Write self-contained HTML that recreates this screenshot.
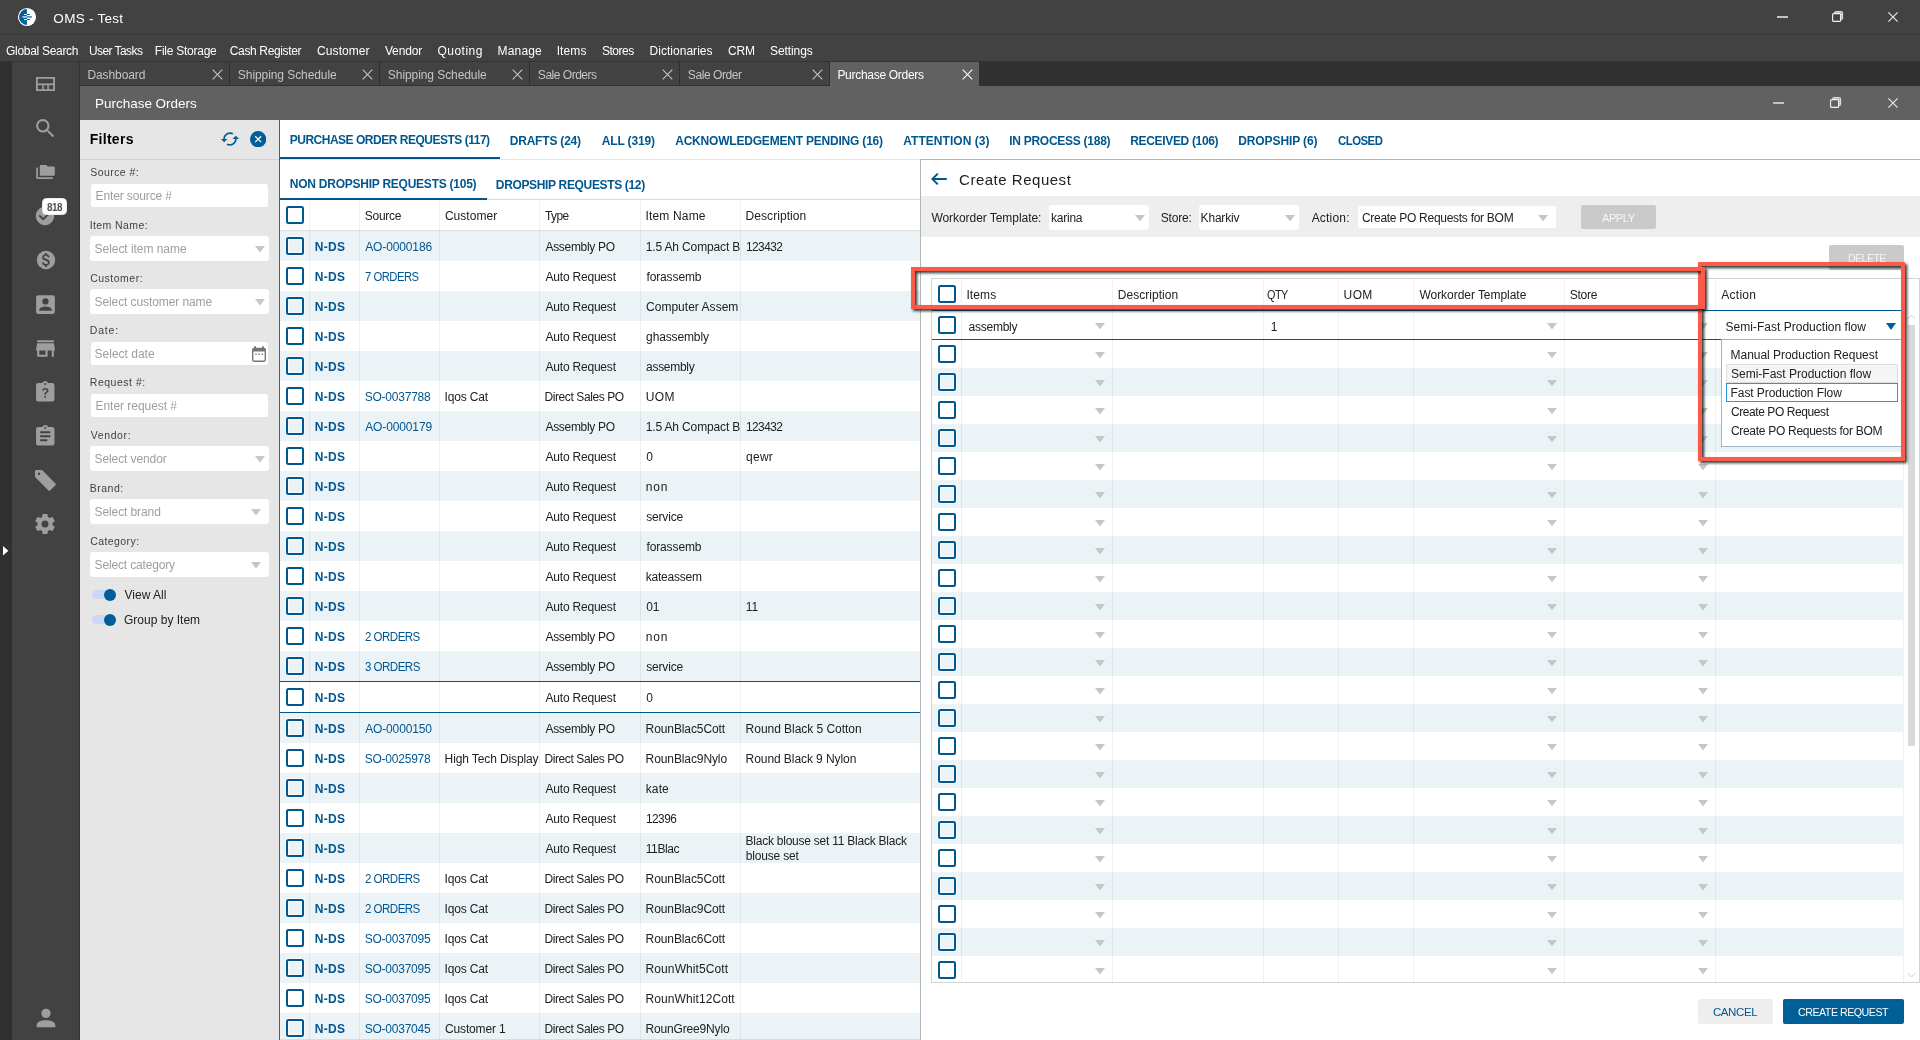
<!DOCTYPE html>
<html><head><meta charset="utf-8"><title>OMS - Test</title>
<style>
html,body{margin:0;padding:0;}
body{width:1920px;height:1040px;overflow:hidden;position:relative;background:#fff;
font-family:"Liberation Sans",sans-serif;font-size:12px;color:#212121;}
div,span.t,svg{position:absolute;box-sizing:border-box;}
span.t{white-space:nowrap;}
.cb{width:18px;height:18px;border:2px solid #00568f;border-radius:2.5px;box-shadow:0 0 0 1px rgba(255,255,255,.55),inset 0 0 0 1px rgba(255,255,255,.55);}
#root{left:0;top:0;width:1920px;height:1040px;will-change:transform;}
</style></head><body><div id="root">
<div style="left:0px;top:0px;width:1920px;height:61px;background:#424242;"></div>
<div style="left:0px;top:34px;width:1920px;height:1px;background:#383838;"></div>
<div style="left:0px;top:61px;width:1920px;height:25px;background:#303030;"></div>
<div style="left:0px;top:61px;width:1920px;height:1px;background:#343434;"></div>
<div style="left:0px;top:62px;width:12px;height:978px;background:#303030;"></div>
<div style="left:12px;top:62px;width:68px;height:978px;background:#424242;"></div>
<div style="left:79px;top:62px;width:1px;height:978px;background:#333333;"></div>
<div style="left:80px;top:86px;width:1840px;height:34px;background:#616161;"></div>
<svg style="left:17px;top:7px" width="20" height="20" viewBox="0 0 20 20"><circle cx="10" cy="10" r="9.6" fill="#3a3a3a"/><circle cx="10" cy="10" r="9.1" fill="#fff"/><path d="M9.9 2.1 A7.9 7.9 0 0 0 9.9 17.9 Z" fill="#00609c"/><rect x="7" y="7" width="2.9" height="1" fill="#fff"/><rect x="9.9" y="7" width="3" height="1" fill="#00609c"/><rect x="5.4" y="9.1" width="4.5" height="1.6" fill="#c4dcea"/><rect x="9.9" y="9.1" width="5" height="1.6" fill="#3f86b4"/><rect x="7" y="12" width="2.9" height="1" fill="#fff"/><rect x="9.9" y="12" width="3" height="1" fill="#00609c"/></svg>
<span class="t" style="left:53.36px;top:9px;font-size:13.5px;line-height:20px;color:#fff;letter-spacing:0.275px;">OMS - Test</span>
<div style="left:1777.3px;top:16px;width:10.5px;height:2px;background:#c2c2c2;"></div>
<svg style="left:1832px;top:11.2px" width="12" height="11" viewBox="0 0 12 11"><rect x="2.6" y="0.6" width="8" height="8" rx="1" fill="#b4b4b4" stroke="#e6e6e6" stroke-width="1"/><rect x="0.6" y="2.6" width="8" height="7.8" rx="1" fill="#424242" stroke="#f2f2f2" stroke-width="1.1"/></svg>
<svg style="left:1887.5px;top:12px" width="10" height="10" viewBox="0 0 10 10" stroke="#ececec" stroke-width="1.15"><path d="M0.4 0.4L9.6 9.6M9.6 0.4L0.4 9.6"/></svg>
<div style="left:1773.4px;top:102px;width:10.5px;height:2px;background:#c2c2c2;"></div>
<svg style="left:1830px;top:97.2px" width="12" height="11" viewBox="0 0 12 11"><rect x="2.6" y="0.6" width="8" height="8" rx="1" fill="#b4b4b4" stroke="#e6e6e6" stroke-width="1"/><rect x="0.6" y="2.6" width="8" height="7.8" rx="1" fill="#616161" stroke="#f2f2f2" stroke-width="1.1"/></svg>
<svg style="left:1887.5px;top:98px" width="10" height="10" viewBox="0 0 10 10" stroke="#ececec" stroke-width="1.15"><path d="M0.4 0.4L9.6 9.6M9.6 0.4L0.4 9.6"/></svg>
<span class="t" style="left:6.00px;top:42px;font-size:12px;line-height:18px;color:#fff;letter-spacing:-0.297px;">Global Search</span>
<span class="t" style="left:89.48px;top:42px;font-size:12px;line-height:18px;color:#fff;letter-spacing:-0.540px;transform:scaleX(0.9920);transform-origin:0 50%;">User Tasks</span>
<span class="t" style="left:154.82px;top:42px;font-size:12px;line-height:18px;color:#fff;letter-spacing:-0.253px;">File Storage</span>
<span class="t" style="left:229.79px;top:42px;font-size:12px;line-height:18px;color:#fff;letter-spacing:-0.360px;">Cash Register</span>
<span class="t" style="left:317.09px;top:42px;font-size:12px;line-height:18px;color:#fff;letter-spacing:0.070px;">Customer</span>
<span class="t" style="left:384.95px;top:42px;font-size:12px;line-height:18px;color:#fff;letter-spacing:-0.159px;">Vendor</span>
<span class="t" style="left:437.43px;top:42px;font-size:12px;line-height:18px;color:#fff;letter-spacing:0.485px;">Quoting</span>
<span class="t" style="left:497.62px;top:42px;font-size:12px;line-height:18px;color:#fff;letter-spacing:0.148px;">Manage</span>
<span class="t" style="left:556.69px;top:42px;font-size:12px;line-height:18px;color:#fff;letter-spacing:0.099px;">Items</span>
<span class="t" style="left:601.96px;top:42px;font-size:12px;line-height:18px;color:#fff;letter-spacing:-0.462px;">Stores</span>
<span class="t" style="left:649.62px;top:42px;font-size:12px;line-height:18px;color:#fff;letter-spacing:0.020px;">Dictionaries</span>
<span class="t" style="left:727.99px;top:42px;font-size:12px;line-height:18px;color:#fff;letter-spacing:-0.217px;">CRM</span>
<span class="t" style="left:770.06px;top:42px;font-size:12px;line-height:18px;color:#fff;letter-spacing:-0.097px;">Settings</span>
<div style="left:80px;top:62px;width:149px;height:23px;background:#424242;"></div>
<span class="t" style="left:87.42px;top:66px;font-size:12px;line-height:18px;color:#c4c4c4;letter-spacing:-0.083px;">Dashboard</span>
<svg style="left:212px;top:69px" width="11" height="11" viewBox="0 0 11 11" stroke="#c4c4c4" stroke-width="1.1"><path d="M0.7 0.7L10.3 10.3M10.3 0.7L0.7 10.3"/></svg>
<div style="left:230px;top:62px;width:149px;height:23px;background:#424242;"></div>
<span class="t" style="left:237.86px;top:66px;font-size:12px;line-height:18px;color:#c4c4c4;letter-spacing:-0.075px;">Shipping Schedule</span>
<svg style="left:362px;top:69px" width="11" height="11" viewBox="0 0 11 11" stroke="#c4c4c4" stroke-width="1.1"><path d="M0.7 0.7L10.3 10.3M10.3 0.7L0.7 10.3"/></svg>
<div style="left:380px;top:62px;width:149px;height:23px;background:#424242;"></div>
<span class="t" style="left:387.86px;top:66px;font-size:12px;line-height:18px;color:#c4c4c4;letter-spacing:-0.075px;">Shipping Schedule</span>
<svg style="left:512px;top:69px" width="11" height="11" viewBox="0 0 11 11" stroke="#c4c4c4" stroke-width="1.1"><path d="M0.7 0.7L10.3 10.3M10.3 0.7L0.7 10.3"/></svg>
<div style="left:530px;top:62px;width:149px;height:23px;background:#424242;"></div>
<span class="t" style="left:537.86px;top:66px;font-size:12px;line-height:18px;color:#c4c4c4;letter-spacing:-0.485px;">Sale Orders</span>
<svg style="left:662px;top:69px" width="11" height="11" viewBox="0 0 11 11" stroke="#c4c4c4" stroke-width="1.1"><path d="M0.7 0.7L10.3 10.3M10.3 0.7L0.7 10.3"/></svg>
<div style="left:680px;top:62px;width:149px;height:23px;background:#424242;"></div>
<span class="t" style="left:687.86px;top:66px;font-size:12px;line-height:18px;color:#c4c4c4;letter-spacing:-0.432px;">Sale Order</span>
<svg style="left:812px;top:69px" width="11" height="11" viewBox="0 0 11 11" stroke="#c4c4c4" stroke-width="1.1"><path d="M0.7 0.7L10.3 10.3M10.3 0.7L0.7 10.3"/></svg>
<div style="left:830px;top:62px;width:149px;height:24px;background:#616161;"></div>
<span class="t" style="left:837.42px;top:66px;font-size:12px;line-height:18px;color:#fff;letter-spacing:-0.292px;">Purchase Orders</span>
<svg style="left:962px;top:69px" width="11" height="11" viewBox="0 0 11 11" stroke="#fff" stroke-width="1.1"><path d="M0.7 0.7L10.3 10.3M10.3 0.7L0.7 10.3"/></svg>
<span class="t" style="left:95.09px;top:94px;font-size:13.5px;line-height:20px;color:#fff;letter-spacing:-0.032px;">Purchase Orders</span>
<svg style="left:36px;top:77px" width="19" height="14" viewBox="0 0 19 14" fill="none" stroke="#9e9e9e"><rect x="0.9" y="0.9" width="17.2" height="12.2" stroke-width="1.8"/><path d="M1 7.3H18" stroke-width="1.8"/><path d="M7.1 7.2V13M12.15 7.2V13" stroke-width="2.1" stroke-opacity="0.8"/></svg>
<svg style="left:36px;top:165px" width="19" height="14" viewBox="0 0 19 14" fill="#9e9e9e"><path d="M5 0H10.2L11.8 1.6H17.6A1.2 1.2 0 0 1 18.8 2.8V9.6A1.2 1.2 0 0 1 17.6 10.8H5A1.2 1.2 0 0 1 3.8 9.6V1.2A1.2 1.2 0 0 1 5 0Z"/><path d="M0.2 2.4H1.9V12.2H16.8V14H1.4A1.2 1.2 0 0 1 0.2 12.8Z"/></svg>
<svg style="left:33.1px;top:115.6px" width="24.8" height="24.8" viewBox="0 0 24 24"><path fill="#9e9e9e" d="M9.5,3A6.5,6.5 0 0,1 16,9.5C16,11.11 15.41,12.59 14.44,13.73L14.71,14H15.5L20.5,19L19,20.5L14,15.5V14.71L13.73,14.44C12.59,15.41 11.11,16 9.5,16A6.5,6.5 0 0,1 3,9.5A6.5,6.5 0 0,1 9.5,3M9.5,5C7,5 5,7 5,9.5C5,12 7,14 9.5,14C12,14 14,12 14,9.5C14,7 12,5 9.5,5Z"/></svg>
<svg style="left:34.3px;top:205px" width="22" height="22" viewBox="0 0 24 24"><path fill="#9e9e9e" d="M12 2C6.5 2 2 6.5 2 12S6.5 22 12 22 22 17.5 22 12 17.5 2 12 2M10 17L5 12L6.41 10.59L10 14.17L17.59 6.58L19 8L10 17Z"/></svg>
<svg style="left:34.6px;top:249px" width="22" height="22" viewBox="0 0 24 24"><circle cx="12" cy="12" r="10" fill="#9e9e9e"/><g transform="translate(12 12) scale(1.2 1.26) translate(-11.9 -12)"><path fill="#424242" d="M12.5,6H11V7.1C9.5,7.4 8.5,8.4 8.5,9.8C8.5,11.5 9.9,12.2 11.6,12.7C13.2,13.1 13.6,13.6 13.6,14.3C13.6,14.8 13.2,15.5 12,15.5C10.7,15.5 10.1,14.9 10,14.1H8.3C8.4,15.7 9.6,16.6 11,16.9V18H12.5V16.9C14,16.6 15.3,15.8 15.3,14.2C15.3,12.1 13.5,11.4 12,11C10.5,10.6 10.1,10.2 10.1,9.6C10.1,8.900 10.8,8.4 11.8,8.4C12.9,8.4 13.4,8.900 13.4,9.7H15.1C15,8.4 14.1,7.4 12.5,7.1V6Z"/></g></svg>
<svg style="left:33px;top:291.5px" width="25" height="25" viewBox="0 0 24 24"><path fill="#9e9e9e" d="M6,17C6,15 10,13.9 12,13.9C14,13.9 18,15 18,17V18H6M15,9A3,3 0 0,1 12,12A3,3 0 0,1 9,9A3,3 0 0,1 12,6A3,3 0 0,1 15,9M3,5V19A2,2 0 0,0 5,21H19A2,2 0 0,0 21,19V5A2,2 0 0,0 19,3H5C3.89,3 3,3.9 3,5Z"/></svg>
<svg style="left:33px;top:335.5px" width="25" height="25" viewBox="0 0 24 24"><path fill="#9e9e9e" d="M12,18H6V14H12M21,14V12L20,7H4L3,12V14H4V20H14V14H18V20H20V14M20,4H4V6H20V4Z"/></svg>
<svg style="left:33.25px;top:379.75px" width="24.5" height="24.5" viewBox="0 0 24 24"><path fill="#9e9e9e" d="M19,3H14.82C14.4,1.84 13.3,1 12,1C10.7,1 9.6,1.84 9.18,3H5A2,2 0 0,0 3,5V19A2,2 0 0,0 5,21H19A2,2 0 0,0 21,19V5A2,2 0 0,0 19,3M12,3A1,1 0 0,1 13,4A1,1 0 0,1 12,5A1,1 0 0,1 11,4A1,1 0 0,1 12,3"/><g transform="translate(12 12.6) scale(0.8) translate(-12.1 -12.1)"><path fill="#424242" d="M13,18H11V16H13V18M14.6,11.6C13.6,12.4 13,12.9 13,14.5H11C11,12.4 11.9,11.6 12.9,10.8C13.5,10.3 14,9.9 14,9.2C14,8.4 13.3,7.9 12.2,7.9C11,7.9 10.3,8.5 10.1,9.5L8.2,9.1C8.5,7.3 10,6.2 12.2,6.2C14.5,6.2 16,7.4 16,9.1C16,10.3 15.3,11 14.6,11.6Z"/></g></svg>
<svg style="left:33.25px;top:423.75px" width="24.5" height="24.5" viewBox="0 0 24 24"><path fill="#9e9e9e" d="M17,9H7V7H17M17,13H7V11H17M14,17H7V15H14M12,3A1,1 0 0,1 13,4A1,1 0 0,1 12,5A1,1 0 0,1 11,4A1,1 0 0,1 12,3M19,3H14.82C14.4,1.84 13.3,1 12,1C10.7,1 9.6,1.84 9.18,3H5A2,2 0 0,0 3,5V19A2,2 0 0,0 5,21H19A2,2 0 0,0 21,19V5A2,2 0 0,0 19,3Z"/></svg>
<svg style="left:34.9px;top:469.7px" width="22" height="22" viewBox="0 0 22 22"><path d="M1.2 1.2L6.5 1.2L19.6 14.3L14.3 19.6L1.2 6.5Z" fill="#9e9e9e" stroke="#9e9e9e" stroke-width="2.4" stroke-linejoin="round"/><circle cx="4" cy="3.8" r="1.25" fill="#424242"/></svg>
<svg style="left:33.2px;top:512px" width="24" height="24" viewBox="0 0 24 24"><path fill="#9e9e9e" d="M12,15.5A3.5,3.5 0 0,1 8.5,12A3.5,3.5 0 0,1 12,8.5A3.5,3.5 0 0,1 15.5,12A3.5,3.5 0 0,1 12,15.5M19.43,12.97C19.47,12.65 19.5,12.33 19.5,12C19.5,11.67 19.47,11.34 19.43,11L21.54,9.37C21.73,9.22 21.78,8.95 21.66,8.73L19.66,5.27C19.54,5.05 19.27,4.96 19.05,5.05L16.56,6.05C16.04,5.66 15.5,5.32 14.87,5.07L14.5,2.42C14.46,2.18 14.25,2 14,2H10C9.75,2 9.54,2.18 9.5,2.42L9.13,5.07C8.5,5.32 7.96,5.66 7.44,6.05L4.95,5.05C4.73,4.96 4.46,5.05 4.34,5.27L2.34,8.73C2.21,8.95 2.27,9.22 2.46,9.37L4.57,11C4.53,11.34 4.5,11.67 4.5,12C4.5,12.33 4.53,12.65 4.57,12.97L2.46,14.63C2.27,14.78 2.21,15.05 2.34,15.27L4.34,18.73C4.46,18.95 4.73,19.03 4.95,18.95L7.44,17.94C7.96,18.34 8.5,18.68 9.13,18.93L9.5,21.58C9.54,21.82 9.75,22 10,22H14C14.25,22 14.46,21.82 14.5,21.58L14.87,18.93C15.5,18.67 16.04,18.34 16.56,17.94L19.05,18.95C19.27,19.03 19.54,18.95 19.66,18.73L21.66,15.27C21.78,15.05 21.73,14.78 21.54,14.63L19.43,12.97Z"/></svg>
<svg style="left:31.5px;top:1004px" width="28" height="28" viewBox="0 0 24 24"><path fill="#9e9e9e" d="M12,4A4,4 0 0,1 16,8A4,4 0 0,1 12,12A4,4 0 0,1 8,8A4,4 0 0,1 12,4M12,14C16.42,14 20,15.79 20,18V20H4V18C4,15.79 7.58,14 12,14Z"/></svg>
<div style="left:42.4px;top:197.8px;width:24.4px;height:17.2px;background:#fff;border-radius:4.5px;border:1px solid #ededed;"></div>
<span class="t" style="left:46.79px;top:200px;font-size:10px;line-height:16px;color:#505050;font-weight:bold;letter-spacing:-0.450px;transform:scaleX(0.9893);transform-origin:0 50%;">818</span>
<svg style="left:3px;top:546px" width="6" height="10" viewBox="0 0 6 10"><path d="M0 0L5.4 4.8L0 9.6Z" fill="#fff"/></svg>
<div style="left:80px;top:120px;width:199px;height:920px;background:#e6e6e6;"></div>
<div style="left:279px;top:120px;width:1px;height:920px;background:#5a5a5a;"></div>
<div style="left:80px;top:159px;width:199px;height:1px;background:#d2d2d2;"></div>
<span class="t" style="left:89.66px;top:129px;font-size:14px;line-height:20px;color:#000;font-weight:bold;letter-spacing:0.299px;">Filters</span>
<svg style="left:220.1px;top:129.2px" width="20" height="20" viewBox="0 0 24 24"><path fill="#005f96" d="M19 8l-4 4h3c0 3.31-2.69 6-6 6-1.01 0-1.97-.25-2.8-.7l-1.46 1.46C8.97 19.54 10.43 20 12 20c4.42 0 8-3.58 8-8h3l-4-4zM6 12c0-3.310 2.69-6 6-6 1.010 0 1.970.25 2.800.7l1.460-1.460C15.030 4.460 13.570 4 12 4c-4.420 0-8 3.580-8 8H1l4 4 4-4H6z"/></svg>
<svg style="left:250px;top:130.9px" width="16.3" height="16.3" viewBox="0 0 16 16"><circle cx="8" cy="8" r="8" fill="#005f96"/><path d="M5.1 5.1L10.9 10.9M10.9 5.1L5.1 10.9" stroke="#fff" stroke-width="1.25"/></svg>
<span class="t" style="left:90.22px;top:164px;font-size:10.5px;line-height:16px;color:#424242;letter-spacing:0.435px;">Source #:</span>
<div style="left:90.7px;top:184px;width:177.6px;height:23px;background:#fff;border-radius:2.5px;"></div>
<span class="t" style="left:95.52px;top:187px;font-size:12px;line-height:18px;color:#9e9e9e;letter-spacing:-0.116px;">Enter source #</span>
<span class="t" style="left:89.73px;top:217px;font-size:10.5px;line-height:16px;color:#424242;letter-spacing:0.407px;">Item Name:</span>
<div style="left:90px;top:236px;width:179px;height:25px;background:#fff;border-radius:3px;"></div>
<span class="t" style="left:94.56px;top:240px;font-size:12px;line-height:18px;color:#9e9e9e;letter-spacing:-0.043px;">Select item name</span>
<svg style="left:255.1px;top:246.2px" width="10" height="6.6" viewBox="0 0 10 6.6"><path d="M0 0H10L5 6.6Z" fill="#c6c6c6"/></svg>
<span class="t" style="left:90.17px;top:270px;font-size:10.5px;line-height:16px;color:#424242;letter-spacing:0.507px;">Customer:</span>
<div style="left:90px;top:289px;width:179px;height:25px;background:#fff;border-radius:3px;"></div>
<span class="t" style="left:94.56px;top:293px;font-size:12px;line-height:18px;color:#9e9e9e;letter-spacing:-0.095px;">Select customer name</span>
<svg style="left:255.1px;top:299.2px" width="10" height="6.6" viewBox="0 0 10 6.6"><path d="M0 0H10L5 6.6Z" fill="#c6c6c6"/></svg>
<span class="t" style="left:89.84px;top:322px;font-size:10.5px;line-height:16px;color:#424242;letter-spacing:0.803px;">Date:</span>
<div style="left:90.7px;top:342px;width:177.6px;height:23px;background:#fff;border-radius:2.5px;"></div>
<span class="t" style="left:94.56px;top:345px;font-size:12px;line-height:18px;color:#9e9e9e;letter-spacing:0.003px;">Select date</span>
<svg style="left:252px;top:345.6px" width="14" height="16" viewBox="0 0 14 16"><rect x="0.7" y="2.5" width="12.6" height="12.8" rx="1.6" fill="none" stroke="#757575" stroke-width="1.4"/><rect x="0.7" y="2.5" width="12.6" height="3" fill="#757575"/><rect x="2.2" y="0.2" width="1.8" height="3" fill="#757575"/><rect x="10" y="0.2" width="1.8" height="3" fill="#757575"/><rect x="3.1" y="7.6" width="1.7" height="1.2" fill="#757575"/><rect x="6.1" y="7.6" width="1.7" height="1.2" fill="#757575"/><rect x="9.3" y="7.6" width="1.7" height="1.2" fill="#757575"/></svg>
<span class="t" style="left:89.84px;top:374px;font-size:10.5px;line-height:16px;color:#424242;letter-spacing:0.503px;">Request #:</span>
<div style="left:90.7px;top:394px;width:177.6px;height:23px;background:#fff;border-radius:2.5px;"></div>
<span class="t" style="left:95.52px;top:397px;font-size:12px;line-height:18px;color:#9e9e9e;letter-spacing:-0.037px;">Enter request #</span>
<span class="t" style="left:90.65px;top:427px;font-size:10.5px;line-height:16px;color:#424242;letter-spacing:0.634px;">Vendor:</span>
<div style="left:90px;top:446px;width:179px;height:25px;background:#fff;border-radius:3px;"></div>
<span class="t" style="left:94.56px;top:450px;font-size:12px;line-height:18px;color:#9e9e9e;letter-spacing:-0.096px;">Select vendor</span>
<svg style="left:255.1px;top:456.2px" width="10" height="6.6" viewBox="0 0 10 6.6"><path d="M0 0H10L5 6.6Z" fill="#c6c6c6"/></svg>
<span class="t" style="left:89.84px;top:480px;font-size:10.5px;line-height:16px;color:#424242;letter-spacing:0.477px;">Brand:</span>
<div style="left:90px;top:499px;width:179px;height:25px;background:#fff;border-radius:3px;"></div>
<span class="t" style="left:94.56px;top:503px;font-size:12px;line-height:18px;color:#9e9e9e;letter-spacing:-0.098px;">Select brand</span>
<svg style="left:251.1px;top:509.2px" width="10" height="6.6" viewBox="0 0 10 6.6"><path d="M0 0H10L5 6.6Z" fill="#c6c6c6"/></svg>
<span class="t" style="left:90.17px;top:533px;font-size:10.5px;line-height:16px;color:#424242;letter-spacing:0.433px;">Category:</span>
<div style="left:90px;top:552px;width:179px;height:25px;background:#fff;border-radius:3px;"></div>
<span class="t" style="left:94.56px;top:556px;font-size:12px;line-height:18px;color:#9e9e9e;letter-spacing:-0.154px;">Select category</span>
<svg style="left:251.1px;top:562.2px" width="10" height="6.6" viewBox="0 0 10 6.6"><path d="M0 0H10L5 6.6Z" fill="#c6c6c6"/></svg>
<div style="left:92px;top:590.4px;width:20px;height:8.3px;background:#cad7f7;border-radius:4.2px;"></div>
<div style="left:104px;top:588.5px;width:12px;height:12px;background:#005f96;border-radius:6px;"></div>
<span class="t" style="left:124.55px;top:586px;font-size:12px;line-height:18px;color:#212121;letter-spacing:0.006px;">View All</span>
<div style="left:92px;top:615.4px;width:20px;height:8.3px;background:#cad7f7;border-radius:4.2px;"></div>
<div style="left:104px;top:613.5px;width:12px;height:12px;background:#005f96;border-radius:6px;"></div>
<span class="t" style="left:124.00px;top:611px;font-size:12px;line-height:18px;color:#212121;letter-spacing:0.005px;">Group by Item</span>
<div style="left:280px;top:159px;width:640px;height:1px;background:#e4e4e4;"></div>
<div style="left:920px;top:159px;width:1000px;height:1px;background:#b6b6b6;"></div>
<span class="t" style="left:289.70px;top:131px;font-size:12px;line-height:18px;color:#00568f;font-weight:bold;letter-spacing:-0.487px;">PURCHASE ORDER REQUESTS (117)</span>
<span class="t" style="left:509.70px;top:132px;font-size:12px;line-height:18px;color:#00568f;font-weight:bold;letter-spacing:-0.194px;">DRAFTS (24)</span>
<span class="t" style="left:601.70px;top:132px;font-size:12px;line-height:18px;color:#00568f;font-weight:bold;letter-spacing:-0.134px;">ALL (319)</span>
<span class="t" style="left:675.20px;top:132px;font-size:12px;line-height:18px;color:#00568f;font-weight:bold;letter-spacing:-0.202px;">ACKNOWLEDGEMENT PENDING (16)</span>
<span class="t" style="left:903.20px;top:132px;font-size:12px;line-height:18px;color:#00568f;font-weight:bold;letter-spacing:0.051px;">ATTENTION (3)</span>
<span class="t" style="left:1009.20px;top:132px;font-size:12px;line-height:18px;color:#00568f;font-weight:bold;letter-spacing:-0.265px;">IN PROCESS (188)</span>
<span class="t" style="left:1130.20px;top:132px;font-size:12px;line-height:18px;color:#00568f;font-weight:bold;letter-spacing:-0.331px;">RECEIVED (106)</span>
<span class="t" style="left:1238.20px;top:132px;font-size:12px;line-height:18px;color:#00568f;font-weight:bold;letter-spacing:-0.097px;">DROPSHIP (6)</span>
<span class="t" style="left:1337.53px;top:132px;font-size:12px;line-height:18px;color:#00568f;font-weight:bold;letter-spacing:-0.540px;transform:scaleX(0.9499);transform-origin:0 50%;">CLOSED</span>
<div style="left:280px;top:157px;width:220px;height:2px;background:#00568f;"></div>
<span class="t" style="left:289.80px;top:175px;font-size:12px;line-height:18px;color:#00568f;font-weight:bold;letter-spacing:-0.244px;">NON DROPSHIP REQUESTS (105)</span>
<span class="t" style="left:495.80px;top:176px;font-size:12px;line-height:18px;color:#00568f;font-weight:bold;letter-spacing:-0.337px;">DROPSHIP REQUESTS (12)</span>
<div style="left:280px;top:199px;width:640px;height:1px;background:#dadada;"></div>
<div style="left:280px;top:198px;width:207px;height:2px;background:#00568f;"></div>
<div style="left:920px;top:159px;width:1px;height:881px;background:#b4b4b4;"></div>
<div class="cb" style="left:286px;top:206px"></div>
<span class="t" style="left:364.76px;top:207px;font-size:12px;line-height:18px;color:#212121;letter-spacing:-0.251px;">Source</span>
<span class="t" style="left:444.89px;top:207px;font-size:12px;line-height:18px;color:#212121;letter-spacing:0.042px;">Customer</span>
<span class="t" style="left:545.33px;top:207px;font-size:12px;line-height:18px;color:#212121;letter-spacing:-0.540px;transform:scaleX(0.9918);transform-origin:0 50%;">Type</span>
<span class="t" style="left:645.39px;top:207px;font-size:12px;line-height:18px;color:#212121;letter-spacing:0.182px;">Item Name</span>
<span class="t" style="left:745.52px;top:207px;font-size:12px;line-height:18px;color:#212121;letter-spacing:0.073px;">Description</span>
<div style="left:280px;top:230px;width:640px;height:1px;background:#e0e0e0;"></div>
<div style="left:280px;top:231px;width:640px;height:30px;background:#ebf3f7;"></div>
<div class="cb" style="left:286px;top:237px"></div>
<span class="t" style="left:314.80px;top:238px;font-size:12px;line-height:18px;color:#00568f;font-weight:bold;letter-spacing:0.309px;">N-DS</span>
<span class="t" style="left:365.18px;top:238px;font-size:12px;line-height:18px;color:#00568f;letter-spacing:-0.124px;">AO-0000186</span>
<span class="t" style="left:545.48px;top:238px;font-size:12px;line-height:18px;color:#212121;letter-spacing:-0.309px;">Assembly PO</span>
<span class="t" style="left:645.69px;top:238px;font-size:12px;line-height:18px;color:#212121;letter-spacing:-0.139px;">1.5 Ah Compact B</span>
<span class="t" style="left:745.70px;top:238px;font-size:12px;line-height:18px;color:#212121;letter-spacing:-0.540px;transform:scaleX(0.9852);transform-origin:0 50%;">123432</span>
<div class="cb" style="left:286px;top:267px"></div>
<span class="t" style="left:314.80px;top:268px;font-size:12px;line-height:18px;color:#00568f;font-weight:bold;letter-spacing:0.309px;">N-DS</span>
<span class="t" style="left:364.62px;top:268px;font-size:12px;line-height:18px;color:#00568f;letter-spacing:-0.540px;transform:scaleX(0.9395);transform-origin:0 50%;">7 ORDERS</span>
<span class="t" style="left:545.48px;top:268px;font-size:12px;line-height:18px;color:#212121;letter-spacing:-0.201px;">Auto Request</span>
<span class="t" style="left:646.43px;top:268px;font-size:12px;line-height:18px;color:#212121;letter-spacing:-0.120px;">forassemb</span>
<div style="left:280px;top:291px;width:640px;height:30px;background:#ebf3f7;"></div>
<div class="cb" style="left:286px;top:297px"></div>
<span class="t" style="left:314.80px;top:298px;font-size:12px;line-height:18px;color:#00568f;font-weight:bold;letter-spacing:0.309px;">N-DS</span>
<span class="t" style="left:545.48px;top:298px;font-size:12px;line-height:18px;color:#212121;letter-spacing:-0.201px;">Auto Request</span>
<span class="t" style="left:645.99px;top:298px;font-size:12px;line-height:18px;color:#212121;letter-spacing:0.027px;">Computer Assem</span>
<div class="cb" style="left:286px;top:327px"></div>
<span class="t" style="left:314.80px;top:328px;font-size:12px;line-height:18px;color:#00568f;font-weight:bold;letter-spacing:0.309px;">N-DS</span>
<span class="t" style="left:545.48px;top:328px;font-size:12px;line-height:18px;color:#212121;letter-spacing:-0.201px;">Auto Request</span>
<span class="t" style="left:646.10px;top:328px;font-size:12px;line-height:18px;color:#212121;letter-spacing:-0.134px;">ghassembly</span>
<div style="left:280px;top:351px;width:640px;height:30px;background:#ebf3f7;"></div>
<div class="cb" style="left:286px;top:357px"></div>
<span class="t" style="left:314.80px;top:358px;font-size:12px;line-height:18px;color:#00568f;font-weight:bold;letter-spacing:0.309px;">N-DS</span>
<span class="t" style="left:545.48px;top:358px;font-size:12px;line-height:18px;color:#212121;letter-spacing:-0.201px;">Auto Request</span>
<span class="t" style="left:646.09px;top:358px;font-size:12px;line-height:18px;color:#212121;letter-spacing:-0.293px;">assembly</span>
<div class="cb" style="left:286px;top:387px"></div>
<span class="t" style="left:314.80px;top:388px;font-size:12px;line-height:18px;color:#00568f;font-weight:bold;letter-spacing:0.309px;">N-DS</span>
<span class="t" style="left:364.66px;top:388px;font-size:12px;line-height:18px;color:#00568f;letter-spacing:-0.222px;">SO-0037788</span>
<span class="t" style="left:444.49px;top:388px;font-size:12px;line-height:18px;color:#212121;letter-spacing:-0.158px;">Iqos Cat</span>
<span class="t" style="left:544.52px;top:388px;font-size:12px;line-height:18px;color:#212121;letter-spacing:-0.414px;">Direct Sales PO</span>
<span class="t" style="left:645.67px;top:388px;font-size:12px;line-height:18px;color:#212121;letter-spacing:0.455px;">UOM</span>
<div style="left:280px;top:411px;width:640px;height:30px;background:#ebf3f7;"></div>
<div class="cb" style="left:286px;top:417px"></div>
<span class="t" style="left:314.80px;top:418px;font-size:12px;line-height:18px;color:#00568f;font-weight:bold;letter-spacing:0.309px;">N-DS</span>
<span class="t" style="left:365.18px;top:418px;font-size:12px;line-height:18px;color:#00568f;letter-spacing:-0.119px;">AO-0000179</span>
<span class="t" style="left:545.48px;top:418px;font-size:12px;line-height:18px;color:#212121;letter-spacing:-0.309px;">Assembly PO</span>
<span class="t" style="left:645.69px;top:418px;font-size:12px;line-height:18px;color:#212121;letter-spacing:-0.139px;">1.5 Ah Compact B</span>
<span class="t" style="left:745.70px;top:418px;font-size:12px;line-height:18px;color:#212121;letter-spacing:-0.540px;transform:scaleX(0.9852);transform-origin:0 50%;">123432</span>
<div class="cb" style="left:286px;top:447px"></div>
<span class="t" style="left:314.80px;top:448px;font-size:12px;line-height:18px;color:#00568f;font-weight:bold;letter-spacing:0.309px;">N-DS</span>
<span class="t" style="left:545.48px;top:448px;font-size:12px;line-height:18px;color:#212121;letter-spacing:-0.201px;">Auto Request</span>
<span class="t" style="left:646.13px;top:448px;font-size:12px;line-height:18px;color:#212121;">0</span>
<span class="t" style="left:746.10px;top:448px;font-size:12px;line-height:18px;color:#212121;letter-spacing:0.229px;">qewr</span>
<div style="left:280px;top:471px;width:640px;height:30px;background:#ebf3f7;"></div>
<div class="cb" style="left:286px;top:477px"></div>
<span class="t" style="left:314.80px;top:478px;font-size:12px;line-height:18px;color:#00568f;font-weight:bold;letter-spacing:0.309px;">N-DS</span>
<span class="t" style="left:545.48px;top:478px;font-size:12px;line-height:18px;color:#212121;letter-spacing:-0.201px;">Auto Request</span>
<span class="t" style="left:645.80px;top:478px;font-size:12px;line-height:18px;color:#212121;letter-spacing:0.772px;">non</span>
<div class="cb" style="left:286px;top:507px"></div>
<span class="t" style="left:314.80px;top:508px;font-size:12px;line-height:18px;color:#00568f;font-weight:bold;letter-spacing:0.309px;">N-DS</span>
<span class="t" style="left:545.48px;top:508px;font-size:12px;line-height:18px;color:#212121;letter-spacing:-0.201px;">Auto Request</span>
<span class="t" style="left:646.27px;top:508px;font-size:12px;line-height:18px;color:#212121;letter-spacing:-0.191px;">service</span>
<div style="left:280px;top:531px;width:640px;height:30px;background:#ebf3f7;"></div>
<div class="cb" style="left:286px;top:537px"></div>
<span class="t" style="left:314.80px;top:538px;font-size:12px;line-height:18px;color:#00568f;font-weight:bold;letter-spacing:0.309px;">N-DS</span>
<span class="t" style="left:545.48px;top:538px;font-size:12px;line-height:18px;color:#212121;letter-spacing:-0.201px;">Auto Request</span>
<span class="t" style="left:646.43px;top:538px;font-size:12px;line-height:18px;color:#212121;letter-spacing:-0.120px;">forassemb</span>
<div class="cb" style="left:286px;top:567px"></div>
<span class="t" style="left:314.80px;top:568px;font-size:12px;line-height:18px;color:#00568f;font-weight:bold;letter-spacing:0.309px;">N-DS</span>
<span class="t" style="left:545.48px;top:568px;font-size:12px;line-height:18px;color:#212121;letter-spacing:-0.201px;">Auto Request</span>
<span class="t" style="left:645.79px;top:568px;font-size:12px;line-height:18px;color:#212121;letter-spacing:-0.241px;">kateassem</span>
<div style="left:280px;top:591px;width:640px;height:30px;background:#ebf3f7;"></div>
<div class="cb" style="left:286px;top:597px"></div>
<span class="t" style="left:314.80px;top:598px;font-size:12px;line-height:18px;color:#00568f;font-weight:bold;letter-spacing:0.309px;">N-DS</span>
<span class="t" style="left:545.48px;top:598px;font-size:12px;line-height:18px;color:#212121;letter-spacing:-0.201px;">Auto Request</span>
<span class="t" style="left:646.13px;top:598px;font-size:12px;line-height:18px;color:#212121;">01</span>
<span class="t" style="left:745.69px;top:598px;font-size:12px;line-height:18px;color:#212121;">11</span>
<div class="cb" style="left:286px;top:627px"></div>
<span class="t" style="left:314.80px;top:628px;font-size:12px;line-height:18px;color:#00568f;font-weight:bold;letter-spacing:0.309px;">N-DS</span>
<span class="t" style="left:364.62px;top:628px;font-size:12px;line-height:18px;color:#00568f;letter-spacing:-0.540px;transform:scaleX(0.9606);transform-origin:0 50%;">2 ORDERS</span>
<span class="t" style="left:545.48px;top:628px;font-size:12px;line-height:18px;color:#212121;letter-spacing:-0.309px;">Assembly PO</span>
<span class="t" style="left:645.80px;top:628px;font-size:12px;line-height:18px;color:#212121;letter-spacing:0.772px;">non</span>
<div style="left:280px;top:651px;width:640px;height:30px;background:#ebf3f7;"></div>
<div class="cb" style="left:286px;top:657px"></div>
<span class="t" style="left:314.80px;top:658px;font-size:12px;line-height:18px;color:#00568f;font-weight:bold;letter-spacing:0.309px;">N-DS</span>
<span class="t" style="left:364.76px;top:658px;font-size:12px;line-height:18px;color:#00568f;letter-spacing:-0.540px;transform:scaleX(0.9616);transform-origin:0 50%;">3 ORDERS</span>
<span class="t" style="left:545.48px;top:658px;font-size:12px;line-height:18px;color:#212121;letter-spacing:-0.309px;">Assembly PO</span>
<span class="t" style="left:646.27px;top:658px;font-size:12px;line-height:18px;color:#212121;letter-spacing:-0.191px;">service</span>
<div style="left:280px;top:681px;width:640px;height:1px;background:#00568f;"></div>
<div style="left:280px;top:712px;width:640px;height:1px;background:#00568f;"></div>
<div class="cb" style="left:286px;top:688px"></div>
<span class="t" style="left:314.80px;top:689px;font-size:12px;line-height:18px;color:#00568f;font-weight:bold;letter-spacing:0.309px;">N-DS</span>
<span class="t" style="left:545.48px;top:689px;font-size:12px;line-height:18px;color:#212121;letter-spacing:-0.201px;">Auto Request</span>
<span class="t" style="left:646.13px;top:689px;font-size:12px;line-height:18px;color:#212121;">0</span>
<div style="left:280px;top:713px;width:640px;height:30px;background:#ebf3f7;"></div>
<div class="cb" style="left:286px;top:719px"></div>
<span class="t" style="left:314.80px;top:720px;font-size:12px;line-height:18px;color:#00568f;font-weight:bold;letter-spacing:0.309px;">N-DS</span>
<span class="t" style="left:365.18px;top:720px;font-size:12px;line-height:18px;color:#00568f;letter-spacing:-0.141px;">AO-0000150</span>
<span class="t" style="left:545.48px;top:720px;font-size:12px;line-height:18px;color:#212121;letter-spacing:-0.309px;">Assembly PO</span>
<span class="t" style="left:645.62px;top:720px;font-size:12px;line-height:18px;color:#212121;letter-spacing:-0.104px;">RounBlac5Cott</span>
<span class="t" style="left:745.62px;top:720px;font-size:12px;line-height:18px;color:#212121;letter-spacing:-0.036px;">Round Black 5 Cotton</span>
<div class="cb" style="left:286px;top:749px"></div>
<span class="t" style="left:314.80px;top:750px;font-size:12px;line-height:18px;color:#00568f;font-weight:bold;letter-spacing:0.309px;">N-DS</span>
<span class="t" style="left:364.66px;top:750px;font-size:12px;line-height:18px;color:#00568f;letter-spacing:-0.222px;">SO-0025978</span>
<span class="t" style="left:444.62px;top:750px;font-size:12px;line-height:18px;color:#212121;letter-spacing:-0.114px;">High Tech Display</span>
<span class="t" style="left:544.52px;top:750px;font-size:12px;line-height:18px;color:#212121;letter-spacing:-0.414px;">Direct Sales PO</span>
<span class="t" style="left:645.62px;top:750px;font-size:12px;line-height:18px;color:#212121;letter-spacing:-0.103px;">RounBlac9Nylo</span>
<span class="t" style="left:745.62px;top:750px;font-size:12px;line-height:18px;color:#212121;letter-spacing:-0.072px;">Round Black 9 Nylon</span>
<div style="left:280px;top:773px;width:640px;height:30px;background:#ebf3f7;"></div>
<div class="cb" style="left:286px;top:779px"></div>
<span class="t" style="left:314.80px;top:780px;font-size:12px;line-height:18px;color:#00568f;font-weight:bold;letter-spacing:0.309px;">N-DS</span>
<span class="t" style="left:545.48px;top:780px;font-size:12px;line-height:18px;color:#212121;letter-spacing:-0.201px;">Auto Request</span>
<span class="t" style="left:645.79px;top:780px;font-size:12px;line-height:18px;color:#212121;letter-spacing:0.085px;">kate</span>
<div class="cb" style="left:286px;top:809px"></div>
<span class="t" style="left:314.80px;top:810px;font-size:12px;line-height:18px;color:#00568f;font-weight:bold;letter-spacing:0.309px;">N-DS</span>
<span class="t" style="left:545.48px;top:810px;font-size:12px;line-height:18px;color:#212121;letter-spacing:-0.201px;">Auto Request</span>
<span class="t" style="left:645.70px;top:810px;font-size:12px;line-height:18px;color:#212121;letter-spacing:-0.540px;transform:scaleX(0.9874);transform-origin:0 50%;">12396</span>
<div style="left:280px;top:833px;width:640px;height:30px;background:#ebf3f7;"></div>
<div class="cb" style="left:286px;top:839px"></div>
<span class="t" style="left:314.80px;top:840px;font-size:12px;line-height:18px;color:#00568f;font-weight:bold;letter-spacing:0.309px;">N-DS</span>
<span class="t" style="left:545.48px;top:840px;font-size:12px;line-height:18px;color:#212121;letter-spacing:-0.201px;">Auto Request</span>
<span class="t" style="left:645.69px;top:840px;font-size:12px;line-height:18px;color:#212121;letter-spacing:-0.376px;">11Blac</span>
<span class="t" style="left:745.52px;top:832px;font-size:12px;line-height:18px;color:#212121;letter-spacing:-0.235px;">Black blouse set 11 Black Black</span>
<span class="t" style="left:745.73px;top:847px;font-size:12px;line-height:18px;color:#212121;letter-spacing:-0.182px;">blouse set</span>
<div class="cb" style="left:286px;top:869px"></div>
<span class="t" style="left:314.80px;top:870px;font-size:12px;line-height:18px;color:#00568f;font-weight:bold;letter-spacing:0.309px;">N-DS</span>
<span class="t" style="left:364.62px;top:870px;font-size:12px;line-height:18px;color:#00568f;letter-spacing:-0.540px;transform:scaleX(0.9606);transform-origin:0 50%;">2 ORDERS</span>
<span class="t" style="left:444.49px;top:870px;font-size:12px;line-height:18px;color:#212121;letter-spacing:-0.158px;">Iqos Cat</span>
<span class="t" style="left:544.52px;top:870px;font-size:12px;line-height:18px;color:#212121;letter-spacing:-0.414px;">Direct Sales PO</span>
<span class="t" style="left:645.62px;top:870px;font-size:12px;line-height:18px;color:#212121;letter-spacing:-0.104px;">RounBlac5Cott</span>
<div style="left:280px;top:893px;width:640px;height:30px;background:#ebf3f7;"></div>
<div class="cb" style="left:286px;top:899px"></div>
<span class="t" style="left:314.80px;top:900px;font-size:12px;line-height:18px;color:#00568f;font-weight:bold;letter-spacing:0.309px;">N-DS</span>
<span class="t" style="left:364.62px;top:900px;font-size:12px;line-height:18px;color:#00568f;letter-spacing:-0.540px;transform:scaleX(0.9606);transform-origin:0 50%;">2 ORDERS</span>
<span class="t" style="left:444.49px;top:900px;font-size:12px;line-height:18px;color:#212121;letter-spacing:-0.158px;">Iqos Cat</span>
<span class="t" style="left:544.52px;top:900px;font-size:12px;line-height:18px;color:#212121;letter-spacing:-0.414px;">Direct Sales PO</span>
<span class="t" style="left:645.62px;top:900px;font-size:12px;line-height:18px;color:#212121;letter-spacing:-0.104px;">RounBlac9Cott</span>
<div class="cb" style="left:286px;top:929px"></div>
<span class="t" style="left:314.80px;top:930px;font-size:12px;line-height:18px;color:#00568f;font-weight:bold;letter-spacing:0.309px;">N-DS</span>
<span class="t" style="left:364.66px;top:930px;font-size:12px;line-height:18px;color:#00568f;letter-spacing:-0.224px;">SO-0037095</span>
<span class="t" style="left:444.49px;top:930px;font-size:12px;line-height:18px;color:#212121;letter-spacing:-0.158px;">Iqos Cat</span>
<span class="t" style="left:544.52px;top:930px;font-size:12px;line-height:18px;color:#212121;letter-spacing:-0.414px;">Direct Sales PO</span>
<span class="t" style="left:645.62px;top:930px;font-size:12px;line-height:18px;color:#212121;letter-spacing:-0.104px;">RounBlac6Cott</span>
<div style="left:280px;top:953px;width:640px;height:30px;background:#ebf3f7;"></div>
<div class="cb" style="left:286px;top:959px"></div>
<span class="t" style="left:314.80px;top:960px;font-size:12px;line-height:18px;color:#00568f;font-weight:bold;letter-spacing:0.309px;">N-DS</span>
<span class="t" style="left:364.66px;top:960px;font-size:12px;line-height:18px;color:#00568f;letter-spacing:-0.224px;">SO-0037095</span>
<span class="t" style="left:444.49px;top:960px;font-size:12px;line-height:18px;color:#212121;letter-spacing:-0.158px;">Iqos Cat</span>
<span class="t" style="left:544.52px;top:960px;font-size:12px;line-height:18px;color:#212121;letter-spacing:-0.414px;">Direct Sales PO</span>
<span class="t" style="left:645.62px;top:960px;font-size:12px;line-height:18px;color:#212121;letter-spacing:0.083px;">RounWhit5Cott</span>
<div class="cb" style="left:286px;top:989px"></div>
<span class="t" style="left:314.80px;top:990px;font-size:12px;line-height:18px;color:#00568f;font-weight:bold;letter-spacing:0.309px;">N-DS</span>
<span class="t" style="left:364.66px;top:990px;font-size:12px;line-height:18px;color:#00568f;letter-spacing:-0.224px;">SO-0037095</span>
<span class="t" style="left:444.49px;top:990px;font-size:12px;line-height:18px;color:#212121;letter-spacing:-0.158px;">Iqos Cat</span>
<span class="t" style="left:544.52px;top:990px;font-size:12px;line-height:18px;color:#212121;letter-spacing:-0.414px;">Direct Sales PO</span>
<span class="t" style="left:645.62px;top:990px;font-size:12px;line-height:18px;color:#212121;letter-spacing:0.079px;">RounWhit12Cott</span>
<div style="left:280px;top:1013px;width:640px;height:30px;background:#ebf3f7;"></div>
<div class="cb" style="left:286px;top:1019px"></div>
<span class="t" style="left:314.80px;top:1020px;font-size:12px;line-height:18px;color:#00568f;font-weight:bold;letter-spacing:0.309px;">N-DS</span>
<span class="t" style="left:364.66px;top:1020px;font-size:12px;line-height:18px;color:#00568f;letter-spacing:-0.224px;">SO-0037045</span>
<span class="t" style="left:444.99px;top:1020px;font-size:12px;line-height:18px;color:#212121;letter-spacing:-0.148px;">Customer 1</span>
<span class="t" style="left:544.52px;top:1020px;font-size:12px;line-height:18px;color:#212121;letter-spacing:-0.414px;">Direct Sales PO</span>
<span class="t" style="left:645.62px;top:1020px;font-size:12px;line-height:18px;color:#212121;letter-spacing:-0.172px;">RounGree9Nylo</span>
<div style="left:280px;top:1039px;width:640px;height:1px;background:#dcdcdc;"></div>
<div style="left:309px;top:201px;width:1px;height:839px;background:rgba(0,0,0,0.06);"></div>
<div style="left:359px;top:201px;width:1px;height:839px;background:rgba(0,0,0,0.06);"></div>
<div style="left:439px;top:201px;width:1px;height:839px;background:rgba(0,0,0,0.06);"></div>
<div style="left:539px;top:201px;width:1px;height:839px;background:rgba(0,0,0,0.06);"></div>
<div style="left:640px;top:201px;width:1px;height:839px;background:rgba(0,0,0,0.06);"></div>
<div style="left:740px;top:201px;width:1px;height:839px;background:rgba(0,0,0,0.06);"></div>
<svg style="left:931px;top:173px" width="16" height="12" viewBox="0 0 16 12" fill="none" stroke="#00568f" stroke-width="1.9"><path d="M15.8 6H1.6M6.8 0.6L1.4 6L6.8 11.4"/></svg>
<span class="t" style="left:959.04px;top:169px;font-size:15px;line-height:21px;color:#212121;letter-spacing:0.516px;">Create Request</span>
<div style="left:921px;top:196px;width:999px;height:41px;background:#eeeeee;"></div>
<span class="t" style="left:931.45px;top:209px;font-size:12px;line-height:18px;color:#212121;letter-spacing:-0.055px;">Workorder Template:</span>
<div style="left:1049px;top:205px;width:100px;height:25px;background:#fff;border-radius:3px;"></div>
<span class="t" style="left:1051.09px;top:209px;font-size:12px;line-height:18px;color:#212121;letter-spacing:-0.256px;">karina</span>
<svg style="left:1135.1px;top:215.1px" width="10" height="6.4" viewBox="0 0 10 6.4"><path d="M0 0H10L5 6.4Z" fill="#c6c6c6"/></svg>
<span class="t" style="left:1160.76px;top:209px;font-size:12px;line-height:18px;color:#212121;letter-spacing:-0.195px;">Store:</span>
<div style="left:1199px;top:205px;width:100px;height:25px;background:#fff;border-radius:3px;"></div>
<span class="t" style="left:1200.62px;top:209px;font-size:12px;line-height:18px;color:#212121;letter-spacing:-0.198px;">Kharkiv</span>
<svg style="left:1285.1px;top:215.1px" width="10" height="6.4" viewBox="0 0 10 6.4"><path d="M0 0H10L5 6.4Z" fill="#c6c6c6"/></svg>
<span class="t" style="left:1311.68px;top:209px;font-size:12px;line-height:18px;color:#212121;letter-spacing:0.189px;">Action:</span>
<div style="left:1358px;top:205.6px;width:197.6px;height:22.6px;background:#fff;border-radius:3px;"></div>
<span class="t" style="left:1361.89px;top:209px;font-size:12px;line-height:18px;color:#212121;letter-spacing:-0.278px;">Create PO Requests for BOM</span>
<svg style="left:1538.1px;top:215.1px" width="10" height="6.4" viewBox="0 0 10 6.4"><path d="M0 0H10L5 6.4Z" fill="#c6c6c6"/></svg>
<div style="left:1581px;top:205px;width:75px;height:24px;background:#cacaca;border-radius:2px;"></div>
<span class="t" style="left:1602.48px;top:209px;font-size:11.5px;line-height:18px;color:#f6f6f6;letter-spacing:-0.517px;transform:scaleX(0.9679);transform-origin:0 50%;">APPLY</span>
<div style="left:1829px;top:245px;width:75px;height:25px;background:#cacaca;border-radius:2px;"></div>
<span class="t" style="left:1847.64px;top:249px;font-size:11.5px;line-height:18px;color:#f6f6f6;letter-spacing:-0.517px;transform:scaleX(0.9085);transform-origin:0 50%;">DELETE</span>
<div style="left:931px;top:278px;width:989px;height:705px;border:1px solid #d4d4d4;"></div>
<div class="cb" style="left:938px;top:285px"></div>
<span class="t" style="left:966.39px;top:286px;font-size:12px;line-height:18px;color:#212121;letter-spacing:0.124px;">Items</span>
<span class="t" style="left:1117.82px;top:286px;font-size:12px;line-height:18px;color:#212121;letter-spacing:0.033px;">Description</span>
<span class="t" style="left:1267.49px;top:286px;font-size:12px;line-height:18px;color:#212121;letter-spacing:-0.540px;transform:scaleX(0.9051);transform-origin:0 50%;">QTY</span>
<span class="t" style="left:1343.57px;top:286px;font-size:12px;line-height:18px;color:#212121;letter-spacing:0.405px;">UOM</span>
<span class="t" style="left:1419.45px;top:286px;font-size:12px;line-height:18px;color:#212121;letter-spacing:-0.043px;">Workorder Template</span>
<span class="t" style="left:1569.76px;top:286px;font-size:12px;line-height:18px;color:#212121;letter-spacing:-0.252px;">Store</span>
<span class="t" style="left:1721.18px;top:286px;font-size:12px;line-height:18px;color:#212121;letter-spacing:0.289px;">Action</span>
<div style="left:932px;top:310px;width:971px;height:1px;background:#00568f;"></div>
<div class="cb" style="left:938px;top:316px"></div>
<span class="t" style="left:968.49px;top:318px;font-size:12px;line-height:18px;color:#212121;letter-spacing:-0.236px;">assembly</span>
<span class="t" style="left:1270.69px;top:318px;font-size:12px;line-height:18px;color:#212121;">1</span>
<div style="left:932px;top:339px;width:971px;height:1px;background:#00568f;"></div>
<svg style="left:1095px;top:323px" width="10" height="6.4" viewBox="0 0 10 6.4"><path d="M0 0H10L5 6.4Z" fill="#c6c6c6"/></svg>
<svg style="left:1547.2px;top:323px" width="10" height="6.4" viewBox="0 0 10 6.4"><path d="M0 0H10L5 6.4Z" fill="#c6c6c6"/></svg>
<svg style="left:1698.2px;top:323px" width="10" height="6.4" viewBox="0 0 10 6.4"><path d="M0 0H10L5 6.4Z" fill="#c6c6c6"/></svg>
<div class="cb" style="left:938px;top:345px;"></div>
<svg style="left:1095px;top:351.8px" width="10" height="6.4" viewBox="0 0 10 6.4"><path d="M0 0H10L5 6.4Z" fill="#c6c6c6"/></svg>
<svg style="left:1547.2px;top:351.8px" width="10" height="6.4" viewBox="0 0 10 6.4"><path d="M0 0H10L5 6.4Z" fill="#c6c6c6"/></svg>
<svg style="left:1698.2px;top:351.8px" width="10" height="6.4" viewBox="0 0 10 6.4"><path d="M0 0H10L5 6.4Z" fill="#c6c6c6"/></svg>
<div style="left:932px;top:368px;width:971px;height:28px;background:#ebf3f7;"></div>
<div class="cb" style="left:938px;top:373px;"></div>
<svg style="left:1095px;top:379.8px" width="10" height="6.4" viewBox="0 0 10 6.4"><path d="M0 0H10L5 6.4Z" fill="#c6c6c6"/></svg>
<svg style="left:1547.2px;top:379.8px" width="10" height="6.4" viewBox="0 0 10 6.4"><path d="M0 0H10L5 6.4Z" fill="#c6c6c6"/></svg>
<svg style="left:1698.2px;top:379.8px" width="10" height="6.4" viewBox="0 0 10 6.4"><path d="M0 0H10L5 6.4Z" fill="#c6c6c6"/></svg>
<div class="cb" style="left:938px;top:401px;"></div>
<svg style="left:1095px;top:407.8px" width="10" height="6.4" viewBox="0 0 10 6.4"><path d="M0 0H10L5 6.4Z" fill="#c6c6c6"/></svg>
<svg style="left:1547.2px;top:407.8px" width="10" height="6.4" viewBox="0 0 10 6.4"><path d="M0 0H10L5 6.4Z" fill="#c6c6c6"/></svg>
<svg style="left:1698.2px;top:407.8px" width="10" height="6.4" viewBox="0 0 10 6.4"><path d="M0 0H10L5 6.4Z" fill="#c6c6c6"/></svg>
<div style="left:932px;top:424px;width:971px;height:28px;background:#ebf3f7;"></div>
<div class="cb" style="left:938px;top:429px;"></div>
<svg style="left:1095px;top:435.8px" width="10" height="6.4" viewBox="0 0 10 6.4"><path d="M0 0H10L5 6.4Z" fill="#c6c6c6"/></svg>
<svg style="left:1547.2px;top:435.8px" width="10" height="6.4" viewBox="0 0 10 6.4"><path d="M0 0H10L5 6.4Z" fill="#c6c6c6"/></svg>
<svg style="left:1698.2px;top:435.8px" width="10" height="6.4" viewBox="0 0 10 6.4"><path d="M0 0H10L5 6.4Z" fill="#c6c6c6"/></svg>
<div class="cb" style="left:938px;top:457px;"></div>
<svg style="left:1095px;top:463.8px" width="10" height="6.4" viewBox="0 0 10 6.4"><path d="M0 0H10L5 6.4Z" fill="#c6c6c6"/></svg>
<svg style="left:1547.2px;top:463.8px" width="10" height="6.4" viewBox="0 0 10 6.4"><path d="M0 0H10L5 6.4Z" fill="#c6c6c6"/></svg>
<svg style="left:1698.2px;top:463.8px" width="10" height="6.4" viewBox="0 0 10 6.4"><path d="M0 0H10L5 6.4Z" fill="#c6c6c6"/></svg>
<div style="left:932px;top:480px;width:971px;height:28px;background:#ebf3f7;"></div>
<div class="cb" style="left:938px;top:485px;"></div>
<svg style="left:1095px;top:491.8px" width="10" height="6.4" viewBox="0 0 10 6.4"><path d="M0 0H10L5 6.4Z" fill="#c6c6c6"/></svg>
<svg style="left:1547.2px;top:491.8px" width="10" height="6.4" viewBox="0 0 10 6.4"><path d="M0 0H10L5 6.4Z" fill="#c6c6c6"/></svg>
<svg style="left:1698.2px;top:491.8px" width="10" height="6.4" viewBox="0 0 10 6.4"><path d="M0 0H10L5 6.4Z" fill="#c6c6c6"/></svg>
<div class="cb" style="left:938px;top:513px;"></div>
<svg style="left:1095px;top:519.8px" width="10" height="6.4" viewBox="0 0 10 6.4"><path d="M0 0H10L5 6.4Z" fill="#c6c6c6"/></svg>
<svg style="left:1547.2px;top:519.8px" width="10" height="6.4" viewBox="0 0 10 6.4"><path d="M0 0H10L5 6.4Z" fill="#c6c6c6"/></svg>
<svg style="left:1698.2px;top:519.8px" width="10" height="6.4" viewBox="0 0 10 6.4"><path d="M0 0H10L5 6.4Z" fill="#c6c6c6"/></svg>
<div style="left:932px;top:536px;width:971px;height:28px;background:#ebf3f7;"></div>
<div class="cb" style="left:938px;top:541px;"></div>
<svg style="left:1095px;top:547.8px" width="10" height="6.4" viewBox="0 0 10 6.4"><path d="M0 0H10L5 6.4Z" fill="#c6c6c6"/></svg>
<svg style="left:1547.2px;top:547.8px" width="10" height="6.4" viewBox="0 0 10 6.4"><path d="M0 0H10L5 6.4Z" fill="#c6c6c6"/></svg>
<svg style="left:1698.2px;top:547.8px" width="10" height="6.4" viewBox="0 0 10 6.4"><path d="M0 0H10L5 6.4Z" fill="#c6c6c6"/></svg>
<div class="cb" style="left:938px;top:569px;"></div>
<svg style="left:1095px;top:575.8px" width="10" height="6.4" viewBox="0 0 10 6.4"><path d="M0 0H10L5 6.4Z" fill="#c6c6c6"/></svg>
<svg style="left:1547.2px;top:575.8px" width="10" height="6.4" viewBox="0 0 10 6.4"><path d="M0 0H10L5 6.4Z" fill="#c6c6c6"/></svg>
<svg style="left:1698.2px;top:575.8px" width="10" height="6.4" viewBox="0 0 10 6.4"><path d="M0 0H10L5 6.4Z" fill="#c6c6c6"/></svg>
<div style="left:932px;top:592px;width:971px;height:28px;background:#ebf3f7;"></div>
<div class="cb" style="left:938px;top:597px;"></div>
<svg style="left:1095px;top:603.8px" width="10" height="6.4" viewBox="0 0 10 6.4"><path d="M0 0H10L5 6.4Z" fill="#c6c6c6"/></svg>
<svg style="left:1547.2px;top:603.8px" width="10" height="6.4" viewBox="0 0 10 6.4"><path d="M0 0H10L5 6.4Z" fill="#c6c6c6"/></svg>
<svg style="left:1698.2px;top:603.8px" width="10" height="6.4" viewBox="0 0 10 6.4"><path d="M0 0H10L5 6.4Z" fill="#c6c6c6"/></svg>
<div class="cb" style="left:938px;top:625px;"></div>
<svg style="left:1095px;top:631.8px" width="10" height="6.4" viewBox="0 0 10 6.4"><path d="M0 0H10L5 6.4Z" fill="#c6c6c6"/></svg>
<svg style="left:1547.2px;top:631.8px" width="10" height="6.4" viewBox="0 0 10 6.4"><path d="M0 0H10L5 6.4Z" fill="#c6c6c6"/></svg>
<svg style="left:1698.2px;top:631.8px" width="10" height="6.4" viewBox="0 0 10 6.4"><path d="M0 0H10L5 6.4Z" fill="#c6c6c6"/></svg>
<div style="left:932px;top:648px;width:971px;height:28px;background:#ebf3f7;"></div>
<div class="cb" style="left:938px;top:653px;"></div>
<svg style="left:1095px;top:659.8px" width="10" height="6.4" viewBox="0 0 10 6.4"><path d="M0 0H10L5 6.4Z" fill="#c6c6c6"/></svg>
<svg style="left:1547.2px;top:659.8px" width="10" height="6.4" viewBox="0 0 10 6.4"><path d="M0 0H10L5 6.4Z" fill="#c6c6c6"/></svg>
<svg style="left:1698.2px;top:659.8px" width="10" height="6.4" viewBox="0 0 10 6.4"><path d="M0 0H10L5 6.4Z" fill="#c6c6c6"/></svg>
<div class="cb" style="left:938px;top:681px;"></div>
<svg style="left:1095px;top:687.8px" width="10" height="6.4" viewBox="0 0 10 6.4"><path d="M0 0H10L5 6.4Z" fill="#c6c6c6"/></svg>
<svg style="left:1547.2px;top:687.8px" width="10" height="6.4" viewBox="0 0 10 6.4"><path d="M0 0H10L5 6.4Z" fill="#c6c6c6"/></svg>
<svg style="left:1698.2px;top:687.8px" width="10" height="6.4" viewBox="0 0 10 6.4"><path d="M0 0H10L5 6.4Z" fill="#c6c6c6"/></svg>
<div style="left:932px;top:704px;width:971px;height:28px;background:#ebf3f7;"></div>
<div class="cb" style="left:938px;top:709px;"></div>
<svg style="left:1095px;top:715.8px" width="10" height="6.4" viewBox="0 0 10 6.4"><path d="M0 0H10L5 6.4Z" fill="#c6c6c6"/></svg>
<svg style="left:1547.2px;top:715.8px" width="10" height="6.4" viewBox="0 0 10 6.4"><path d="M0 0H10L5 6.4Z" fill="#c6c6c6"/></svg>
<svg style="left:1698.2px;top:715.8px" width="10" height="6.4" viewBox="0 0 10 6.4"><path d="M0 0H10L5 6.4Z" fill="#c6c6c6"/></svg>
<div class="cb" style="left:938px;top:737px;"></div>
<svg style="left:1095px;top:743.8px" width="10" height="6.4" viewBox="0 0 10 6.4"><path d="M0 0H10L5 6.4Z" fill="#c6c6c6"/></svg>
<svg style="left:1547.2px;top:743.8px" width="10" height="6.4" viewBox="0 0 10 6.4"><path d="M0 0H10L5 6.4Z" fill="#c6c6c6"/></svg>
<svg style="left:1698.2px;top:743.8px" width="10" height="6.4" viewBox="0 0 10 6.4"><path d="M0 0H10L5 6.4Z" fill="#c6c6c6"/></svg>
<div style="left:932px;top:760px;width:971px;height:28px;background:#ebf3f7;"></div>
<div class="cb" style="left:938px;top:765px;"></div>
<svg style="left:1095px;top:771.8px" width="10" height="6.4" viewBox="0 0 10 6.4"><path d="M0 0H10L5 6.4Z" fill="#c6c6c6"/></svg>
<svg style="left:1547.2px;top:771.8px" width="10" height="6.4" viewBox="0 0 10 6.4"><path d="M0 0H10L5 6.4Z" fill="#c6c6c6"/></svg>
<svg style="left:1698.2px;top:771.8px" width="10" height="6.4" viewBox="0 0 10 6.4"><path d="M0 0H10L5 6.4Z" fill="#c6c6c6"/></svg>
<div class="cb" style="left:938px;top:793px;"></div>
<svg style="left:1095px;top:799.8px" width="10" height="6.4" viewBox="0 0 10 6.4"><path d="M0 0H10L5 6.4Z" fill="#c6c6c6"/></svg>
<svg style="left:1547.2px;top:799.8px" width="10" height="6.4" viewBox="0 0 10 6.4"><path d="M0 0H10L5 6.4Z" fill="#c6c6c6"/></svg>
<svg style="left:1698.2px;top:799.8px" width="10" height="6.4" viewBox="0 0 10 6.4"><path d="M0 0H10L5 6.4Z" fill="#c6c6c6"/></svg>
<div style="left:932px;top:816px;width:971px;height:28px;background:#ebf3f7;"></div>
<div class="cb" style="left:938px;top:821px;"></div>
<svg style="left:1095px;top:827.8px" width="10" height="6.4" viewBox="0 0 10 6.4"><path d="M0 0H10L5 6.4Z" fill="#c6c6c6"/></svg>
<svg style="left:1547.2px;top:827.8px" width="10" height="6.4" viewBox="0 0 10 6.4"><path d="M0 0H10L5 6.4Z" fill="#c6c6c6"/></svg>
<svg style="left:1698.2px;top:827.8px" width="10" height="6.4" viewBox="0 0 10 6.4"><path d="M0 0H10L5 6.4Z" fill="#c6c6c6"/></svg>
<div class="cb" style="left:938px;top:849px;"></div>
<svg style="left:1095px;top:855.8px" width="10" height="6.4" viewBox="0 0 10 6.4"><path d="M0 0H10L5 6.4Z" fill="#c6c6c6"/></svg>
<svg style="left:1547.2px;top:855.8px" width="10" height="6.4" viewBox="0 0 10 6.4"><path d="M0 0H10L5 6.4Z" fill="#c6c6c6"/></svg>
<svg style="left:1698.2px;top:855.8px" width="10" height="6.4" viewBox="0 0 10 6.4"><path d="M0 0H10L5 6.4Z" fill="#c6c6c6"/></svg>
<div style="left:932px;top:872px;width:971px;height:28px;background:#ebf3f7;"></div>
<div class="cb" style="left:938px;top:877px;"></div>
<svg style="left:1095px;top:883.8px" width="10" height="6.4" viewBox="0 0 10 6.4"><path d="M0 0H10L5 6.4Z" fill="#c6c6c6"/></svg>
<svg style="left:1547.2px;top:883.8px" width="10" height="6.4" viewBox="0 0 10 6.4"><path d="M0 0H10L5 6.4Z" fill="#c6c6c6"/></svg>
<svg style="left:1698.2px;top:883.8px" width="10" height="6.4" viewBox="0 0 10 6.4"><path d="M0 0H10L5 6.4Z" fill="#c6c6c6"/></svg>
<div class="cb" style="left:938px;top:905px;"></div>
<svg style="left:1095px;top:911.8px" width="10" height="6.4" viewBox="0 0 10 6.4"><path d="M0 0H10L5 6.4Z" fill="#c6c6c6"/></svg>
<svg style="left:1547.2px;top:911.8px" width="10" height="6.4" viewBox="0 0 10 6.4"><path d="M0 0H10L5 6.4Z" fill="#c6c6c6"/></svg>
<svg style="left:1698.2px;top:911.8px" width="10" height="6.4" viewBox="0 0 10 6.4"><path d="M0 0H10L5 6.4Z" fill="#c6c6c6"/></svg>
<div style="left:932px;top:928px;width:971px;height:28px;background:#ebf3f7;"></div>
<div class="cb" style="left:938px;top:933px;"></div>
<svg style="left:1095px;top:939.8px" width="10" height="6.4" viewBox="0 0 10 6.4"><path d="M0 0H10L5 6.4Z" fill="#c6c6c6"/></svg>
<svg style="left:1547.2px;top:939.8px" width="10" height="6.4" viewBox="0 0 10 6.4"><path d="M0 0H10L5 6.4Z" fill="#c6c6c6"/></svg>
<svg style="left:1698.2px;top:939.8px" width="10" height="6.4" viewBox="0 0 10 6.4"><path d="M0 0H10L5 6.4Z" fill="#c6c6c6"/></svg>
<div class="cb" style="left:938px;top:961px;"></div>
<svg style="left:1095px;top:967.8px" width="10" height="6.4" viewBox="0 0 10 6.4"><path d="M0 0H10L5 6.4Z" fill="#c6c6c6"/></svg>
<svg style="left:1547.2px;top:967.8px" width="10" height="6.4" viewBox="0 0 10 6.4"><path d="M0 0H10L5 6.4Z" fill="#c6c6c6"/></svg>
<svg style="left:1698.2px;top:967.8px" width="10" height="6.4" viewBox="0 0 10 6.4"><path d="M0 0H10L5 6.4Z" fill="#c6c6c6"/></svg>
<div style="left:961px;top:279px;width:1px;height:703px;background:rgba(0,0,0,0.06);"></div>
<div style="left:1112px;top:279px;width:1px;height:703px;background:rgba(0,0,0,0.06);"></div>
<div style="left:1263px;top:279px;width:1px;height:703px;background:rgba(0,0,0,0.06);"></div>
<div style="left:1338px;top:279px;width:1px;height:703px;background:rgba(0,0,0,0.06);"></div>
<div style="left:1413px;top:279px;width:1px;height:703px;background:rgba(0,0,0,0.06);"></div>
<div style="left:1564px;top:279px;width:1px;height:703px;background:rgba(0,0,0,0.06);"></div>
<div style="left:1715px;top:279px;width:1px;height:703px;background:rgba(0,0,0,0.06);"></div>
<div style="left:1903px;top:279px;width:1px;height:703px;background:rgba(0,0,0,0.06);"></div>
<div style="left:1904px;top:311px;width:15px;height:671px;background:#fff;"></div>
<div style="left:1908px;top:325px;width:7px;height:421px;background:#d9d9d9;"></div>
<svg style="left:1907px;top:314px" width="9" height="6" viewBox="0 0 9 6" fill="none" stroke="#d0d0d0" stroke-width="1"><path d="M0.5 5L4.5 1L8.5 5"/></svg>
<svg style="left:1907px;top:972px" width="9" height="6" viewBox="0 0 9 6" fill="none" stroke="#d0d0d0" stroke-width="1"><path d="M0.5 1L4.5 5L8.5 1"/></svg>
<div style="left:1716px;top:311px;width:187px;height:28px;background:#fff;"></div>
<span class="t" style="left:1725.46px;top:318px;font-size:12px;line-height:18px;color:#212121;letter-spacing:0.019px;">Semi-Fast Production flow</span>
<svg style="left:1885.5px;top:323px" width="10" height="7" viewBox="0 0 10 7"><path d="M0 0H10L5 7Z" fill="#005f96"/></svg>
<div style="left:1721px;top:339px;width:184px;height:108px;background:#fff;border:1px solid #9fb4c4;"></div>
<span class="t" style="left:1730.52px;top:346px;font-size:12px;line-height:18px;color:#212121;letter-spacing:-0.026px;">Manual Production Request</span>
<div style="left:1726px;top:364px;width:172px;height:19px;background:#f5f5f5;border:1px solid #dddddd;"></div>
<span class="t" style="left:1730.96px;top:365px;font-size:12px;line-height:18px;color:#212121;letter-spacing:0.002px;">Semi-Fast Production flow</span>
<div style="left:1726px;top:383px;width:172px;height:19px;background:#fff;border:1px solid #2a96d8;"></div>
<span class="t" style="left:1730.52px;top:384px;font-size:12px;line-height:18px;color:#212121;letter-spacing:-0.072px;">Fast Production Flow</span>
<span class="t" style="left:1730.89px;top:403px;font-size:12px;line-height:18px;color:#212121;letter-spacing:-0.414px;">Create PO Request</span>
<span class="t" style="left:1730.89px;top:422px;font-size:12px;line-height:18px;color:#212121;letter-spacing:-0.286px;">Create PO Requests for BOM</span>
<div style="left:1698px;top:262px;width:207px;height:199px;border:4px solid #fd5a49;filter:drop-shadow(2px 2px 1.5px rgba(10,25,25,.9));"></div>
<div style="left:911px;top:267px;width:794px;height:42px;border:4px solid #fd5a49;filter:drop-shadow(2px 2px 1.5px rgba(10,25,25,.9));"></div>
<div style="left:1698px;top:999px;width:75px;height:25px;background:#eeeeee;border-radius:2px;"></div>
<span class="t" style="left:1712.92px;top:1003px;font-size:11.5px;line-height:18px;color:#00568f;letter-spacing:-0.388px;">CANCEL</span>
<div style="left:1783px;top:999px;width:121px;height:25px;background:#005f96;border-radius:2px;"></div>
<span class="t" style="left:1798.21px;top:1003px;font-size:11.5px;line-height:18px;color:#fff;letter-spacing:-0.517px;transform:scaleX(0.9252);transform-origin:0 50%;">CREATE REQUEST</span>
</div></body></html>
